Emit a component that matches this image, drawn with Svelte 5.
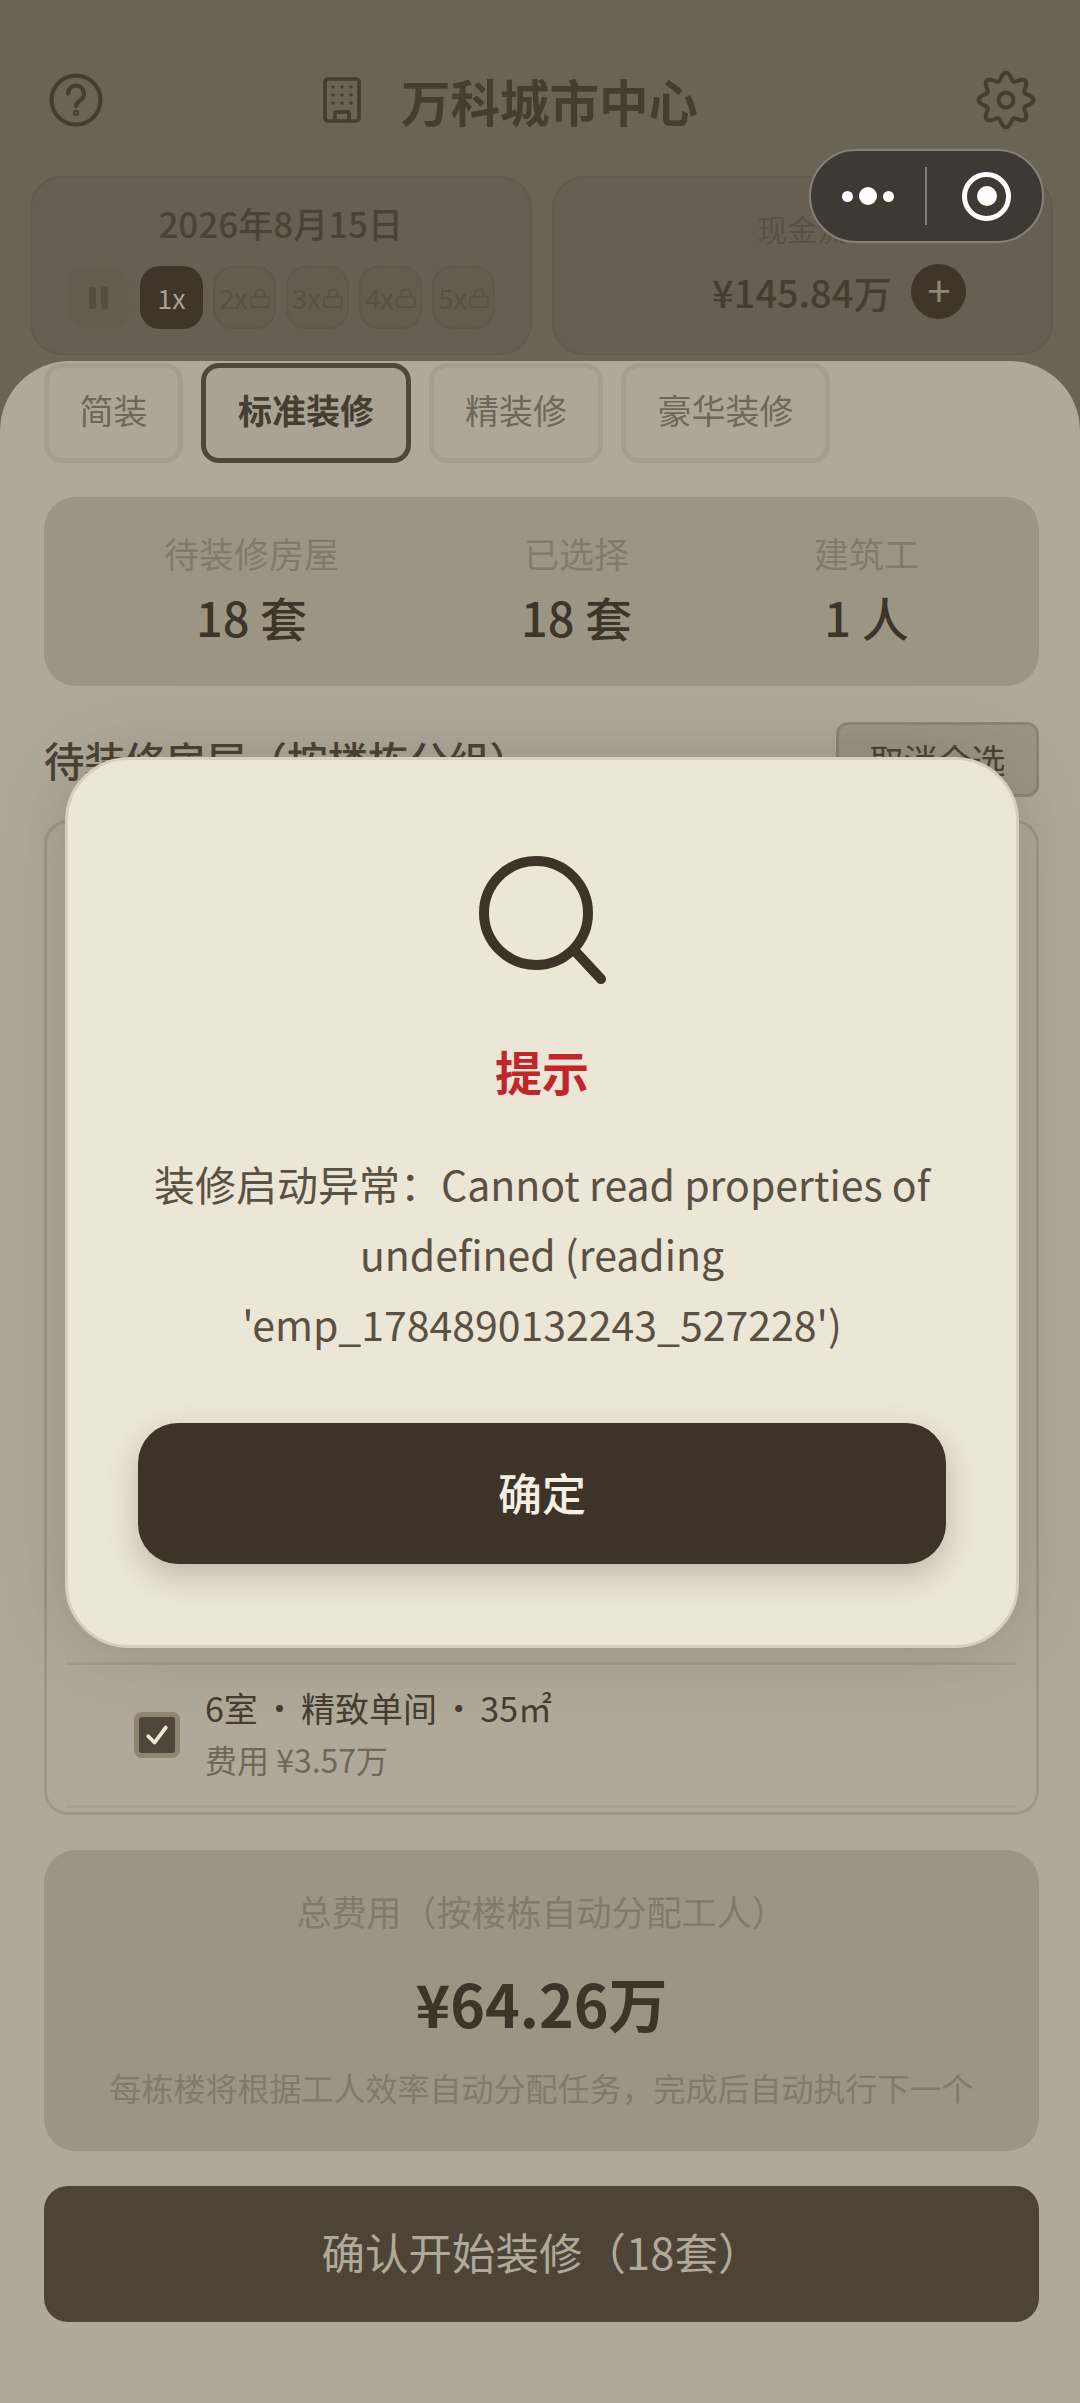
<script>
	const speeds = ['2x', '3x', '4x', '5x'];
	const tabs = [
		{ label: '简装', width: 139 },
		{ label: '标准装修', width: 210, active: true },
		{ label: '精装修', width: 174 },
		{ label: '豪华装修', width: 209 }
	];
	const counts = [
		{ label: '待装修房屋', value: '18 套' },
		{ label: '已选择', value: '18 套' },
		{ label: '建筑工', value: '1 人' }
	];

	// gear outline with eight rounded lobes
	let gear = '';
	for (let i = 0; i < 144; i++) {
		const a = (i / 144) * Math.PI * 2;
		const r = 23.6 + 3.8 * Math.cos(8 * a);
		gear += (i ? 'L' : 'M') + (30 + r * Math.sin(a)).toFixed(2) + ' ' + (30 - r * Math.cos(a)).toFixed(2);
	}
	gear += 'Z';
</script>

<div class="page">
	<header class="top">
		<svg class="help" viewBox="0 0 54 54" fill="none" stroke="#453d30" stroke-width="4" stroke-linecap="round">
			<circle cx="27" cy="27" r="24.5" />
			<path d="M19 20.5a8 8 0 1 1 12.5 6.6c-2.6 1.8-4.5 3-4.5 6" />
			<circle cx="27" cy="40" r="1" />
		</svg>
		<div class="title">
			<svg class="building" viewBox="0 0 38 46" fill="none" stroke="#453d30" stroke-width="3.6" stroke-linejoin="round">
				<rect x="2" y="2" width="34" height="42" rx="3" />
				<path d="M12 44v-9h14v9" />
				<g fill="#453d30" stroke="none">
					{#each [10, 18, 26] as y}
						{#each [10, 19, 28] as x}
							<circle cx={x} cy={y} r="1.7" />
						{/each}
					{/each}
				</g>
			</svg>
			<span>万科城市中心</span>
		</div>
		<svg class="gear" viewBox="0 0 60 60" fill="none" stroke="#453d30" stroke-width="4" stroke-linejoin="round">
			<path d={gear} />
			<circle cx="30" cy="30" r="7.5" />
		</svg>
	</header>

	<section class="status">
		<div class="status-card">
			<div class="date">2026年8月15日</div>
			<div class="speeds">
				<div class="speed pause"><i></i><i></i></div>
				<div class="speed current">1x</div>
				{#each speeds as speed}
					<div class="speed locked">
						{speed}
						<svg viewBox="0 0 20 20" fill="none" stroke="#5a5346" stroke-width="1.8">
							<rect x="1" y="9" width="18" height="10" rx="2" />
							<path d="M5.5 9V6a4.5 4.5 0 0 1 9 0v3" />
						</svg>
					</div>
				{/each}
			</div>
		</div>
		<div class="status-card">
			<div class="cash-label">现金流</div>
			<div class="cash">
				<span>¥145.84万</span>
				<div class="plus">+</div>
			</div>
		</div>
	</section>

	<main class="sheet">
		<div class="tabs">
			{#each tabs as tab}
				<div class="tab" class:active={tab.active} style="width: {tab.width}px">{tab.label}</div>
			{/each}
		</div>

		<div class="counts">
			{#each counts as item}
				<div class="count">
					<div class="count-label">{item.label}</div>
					<div class="count-value">{item.value}</div>
				</div>
			{/each}
		</div>

		<div class="list-head">
			<h2>待装修房屋（按楼栋分组）</h2>
			<div class="select-all">取消全选</div>
		</div>

		<div class="list">
			<div class="room">
				<div class="check">
					<svg viewBox="0 0 24 24" fill="none" stroke="#efe8da" stroke-width="3" stroke-linecap="round" stroke-linejoin="round">
						<path d="M5 13l5 5 9-12" />
					</svg>
				</div>
				<div>
					<div class="room-name">6室 · 精致单间 · 35㎡</div>
					<div class="room-cost">费用 ¥3.57万</div>
				</div>
			</div>
		</div>

		<div class="total">
			<div class="total-label">总费用（按楼栋自动分配工人）</div>
			<div class="total-value">¥64.26万</div>
			<div class="total-note">每栋楼将根据工人效率自动分配任务，完成后自动执行下一个</div>
		</div>

		<div class="confirm">确认开始装修（18套）</div>
	</main>

	<div class="capsule">
		<div class="dots"><i></i><i class="big"></i><i></i></div>
		<div class="divider"></div>
		<div class="target"><i></i></div>
	</div>

	<div class="overlay">
		<div class="modal">
			<svg class="search" viewBox="0 0 130 130" fill="none" stroke="#3d3329" stroke-width="10" stroke-linecap="round">
				<circle cx="59" cy="59" r="52" />
				<path d="M97 96l27 29" />
			</svg>
			<div class="modal-title">提示</div>
			<p>装修启动异常：Cannot read properties of undefined (reading 'emp_1784890132243_527228')</p>
			<div class="ok">确定</div>
		</div>
	</div>
</div>

<style>
	:global(body) {
		margin: 0;
	}

	.page {
		position: relative;
		width: 1080px;
		height: 2403px;
		overflow: hidden;
		background: #6a6356;
		font-family: 'Noto Sans CJK SC', 'Noto Sans', sans-serif;
		color: #453d30;
	}

	.top {
		display: flex;
		align-items: center;
		height: 60px;
		padding: 70px 44px 46px 49px;
	}

	.help {
		width: 54px;
		height: 54px;
	}

	.title {
		flex: 1;
		display: flex;
		align-items: center;
		justify-content: center;
		gap: 40px;
		padding-right: 58px;
		font-size: 49.5px;
		font-weight: 700;
	}

	.building {
		width: 38px;
		height: 46px;
	}

	.gear {
		width: 60px;
		height: 60px;
	}

	.status {
		display: flex;
		gap: 20px;
		padding: 0 27px 0 30px;
	}

	.status-card {
		flex: 1;
		box-sizing: border-box;
		height: 179px;
		border: 2px solid #625b4e;
		border-radius: 32px;
		background: #675f53;
		text-align: center;
	}

	.date {
		margin-top: 22px;
		font-size: 35px;
		line-height: 46px;
		font-weight: 500;
		color: #4a4236;
	}

	.speeds {
		display: flex;
		gap: 10px;
		margin-top: 20px;
		padding-left: 35px;
	}

	.speed {
		box-sizing: border-box;
		display: flex;
		align-items: center;
		justify-content: center;
		gap: 2px;
		width: 63px;
		height: 63px;
		border-radius: 20px;
		font-size: 27px;
	}

	.speed svg {
		width: 20px;
		height: 20px;
		flex: none;
	}

	.pause {
		gap: 5px;
		background: #635c4f;
		border: 2px solid #655e51;
	}

	.pause i {
		width: 7px;
		height: 22px;
		border-radius: 2px;
		background: #544d40;
	}

	.current {
		background: #3f3629;
		color: #a8a090;
	}

	.locked {
		background: #635c4f;
		border: 2px solid #5f584b;
		color: #575043;
	}

	.cash-label {
		margin-top: 28px;
		font-size: 30px;
		line-height: 44px;
		color: #575043;
	}

	.cash {
		display: flex;
		align-items: center;
		justify-content: center;
		gap: 20px;
		margin-top: 14px;
		padding-left: 74px;
		font-size: 38px;
		font-weight: 500;
		color: #453d30;
	}

	.plus {
		width: 55px;
		height: 55px;
		border-radius: 50%;
		background: #3f3629;
		color: #8d8677;
		font-size: 42px;
		font-weight: 400;
		line-height: 50px;
	}

	.sheet {
		box-sizing: border-box;
		height: 2042px;
		margin-top: 6px;
		padding: 2px 41px 0 44px;
		overflow: hidden;
		border-radius: 70px 70px 0 0;
		background: #b0a99a;
	}

	.tabs {
		display: flex;
		gap: 18px;
	}

	.tab {
		box-sizing: border-box;
		height: 100px;
		border: 5px solid #a59e8e;
		border-radius: 18px;
		background: #aea798;
		font-size: 34px;
		line-height: 84px;
		text-align: center;
		color: #6f6859;
	}

	.tab.active {
		border-color: #4f4739;
		background: #aaa394;
		font-weight: 700;
		color: #453d30;
	}

	.counts {
		display: flex;
		justify-content: space-between;
		box-sizing: border-box;
		height: 189px;
		margin-top: 34px;
		padding: 28px 120px 0;
		border-radius: 32px;
		background: #9c9584;
		text-align: center;
	}

	.count-label {
		font-size: 35px;
		line-height: 56px;
		color: #807a6b;
	}

	.count-value {
		margin-top: 6px;
		font-size: 47px;
		line-height: 60px;
		font-weight: 500;
		color: #3d3529;
	}

	.list-head {
		display: flex;
		align-items: center;
		justify-content: space-between;
		height: 75px;
		margin-top: 36px;
	}

	h2 {
		margin: 0;
		font-size: 40.5px;
		font-weight: 500;
		color: #4a4234;
	}

	.select-all {
		box-sizing: border-box;
		width: 203px;
		height: 75px;
		border: 3px solid #8f8570;
		border-radius: 12px;
		background: #9c9584;
		font-size: 34px;
		line-height: 69px;
		text-align: center;
		color: #4a4234;
	}

	.list {
		display: flex;
		flex-direction: column;
		justify-content: flex-end;
		box-sizing: border-box;
		height: 995px;
		margin-top: 23px;
		padding: 0 20px 4px;
		border: 3px solid #9e9787;
		border-radius: 24px;
	}

	.room {
		box-sizing: border-box;
		display: flex;
		align-items: center;
		gap: 25px;
		height: 146px;
		padding-left: 67px;
		border-top: 3px solid #a39c8c;
		border-bottom: 3px solid #a8a192;
	}

	.check {
		box-sizing: border-box;
		display: flex;
		align-items: center;
		justify-content: center;
		width: 46px;
		height: 46px;
		border: 5px solid #8f8570;
		border-radius: 8px;
		background: #4f4739;
	}

	.check svg {
		width: 30px;
		height: 30px;
	}

	.room-name {
		margin-top: -6px;
		font-size: 34px;
		line-height: 48px;
		word-spacing: -3px;
		color: #453d30;
	}

	.room-cost {
		margin-top: 6px;
		font-size: 32px;
		line-height: 42px;
		color: #6f6859;
	}

	.total {
		box-sizing: border-box;
		height: 301px;
		margin-top: 35px;
		padding-top: 37px;
		border-radius: 32px;
		background: #9c9584;
		text-align: center;
	}

	.total-label {
		font-size: 35px;
		line-height: 48px;
		color: #807a6b;
	}

	.total-value {
		margin-top: 24px;
		font-size: 59px;
		line-height: 88px;
		font-weight: 700;
		color: #3d3529;
	}

	.total-note {
		margin-top: 17px;
		font-size: 32px;
		line-height: 46px;
		color: #807a6b;
	}

	.confirm {
		height: 136px;
		margin-top: 35px;
		border-radius: 24px;
		background: #4d4437;
		font-size: 43.5px;
		line-height: 132px;
		text-align: center;
		color: #b0a99a;
	}

	.capsule {
		position: absolute;
		top: 149px;
		left: 809px;
		box-sizing: border-box;
		display: flex;
		align-items: center;
		width: 235px;
		height: 94px;
		border: 2px solid #85807a;
		border-radius: 47px;
		background: #3e3a33;
	}

	.dots {
		display: flex;
		align-items: center;
		justify-content: center;
		gap: 6px;
		width: 114px;
	}

	.dots i {
		width: 11px;
		height: 11px;
		border-radius: 50%;
		background: #fff;
	}

	.dots i.big {
		width: 18px;
		height: 18px;
	}

	.divider {
		width: 2px;
		height: 58px;
		background: #85807a;
	}

	.target {
		box-sizing: border-box;
		display: flex;
		align-items: center;
		justify-content: center;
		width: 49px;
		height: 49px;
		margin-left: 35px;
		border: 5px solid #fff;
		border-radius: 50%;
	}

	.target i {
		width: 20px;
		height: 20px;
		border-radius: 50%;
		background: #fff;
	}

	.overlay {
		position: absolute;
		inset: 0;
		display: flex;
		align-items: center;
		justify-content: center;
		padding: 2px 0 0 4px;
	}

	.modal {
		box-sizing: border-box;
		width: 954px;
		height: 891px;
		padding: 94px 70px 0;
		border: 3px solid #d6cfbe;
		border-radius: 64px;
		background: #ece6d7;
		box-shadow: 0 0 70px rgba(61, 51, 41, 0.22);
		text-align: center;
	}

	.search {
		display: block;
		width: 130px;
		height: 130px;
		margin: 0 auto;
	}

	.modal-title {
		margin-top: 53px;
		font-size: 47px;
		line-height: 68px;
		font-weight: 700;
		color: #c0272d;
	}

	p {
		margin: 43px 0 0;
		font-size: 41px;
		line-height: 70px;
		color: #5a5144;
	}

	.ok {
		height: 141px;
		margin-top: 65px;
		border-radius: 40px;
		background: #3d3329;
		box-shadow: 0 12px 32px rgba(61, 51, 41, 0.25);
		font-size: 44px;
		line-height: 139px;
		font-weight: 500;
		color: #f5efe3;
	}
</style>
